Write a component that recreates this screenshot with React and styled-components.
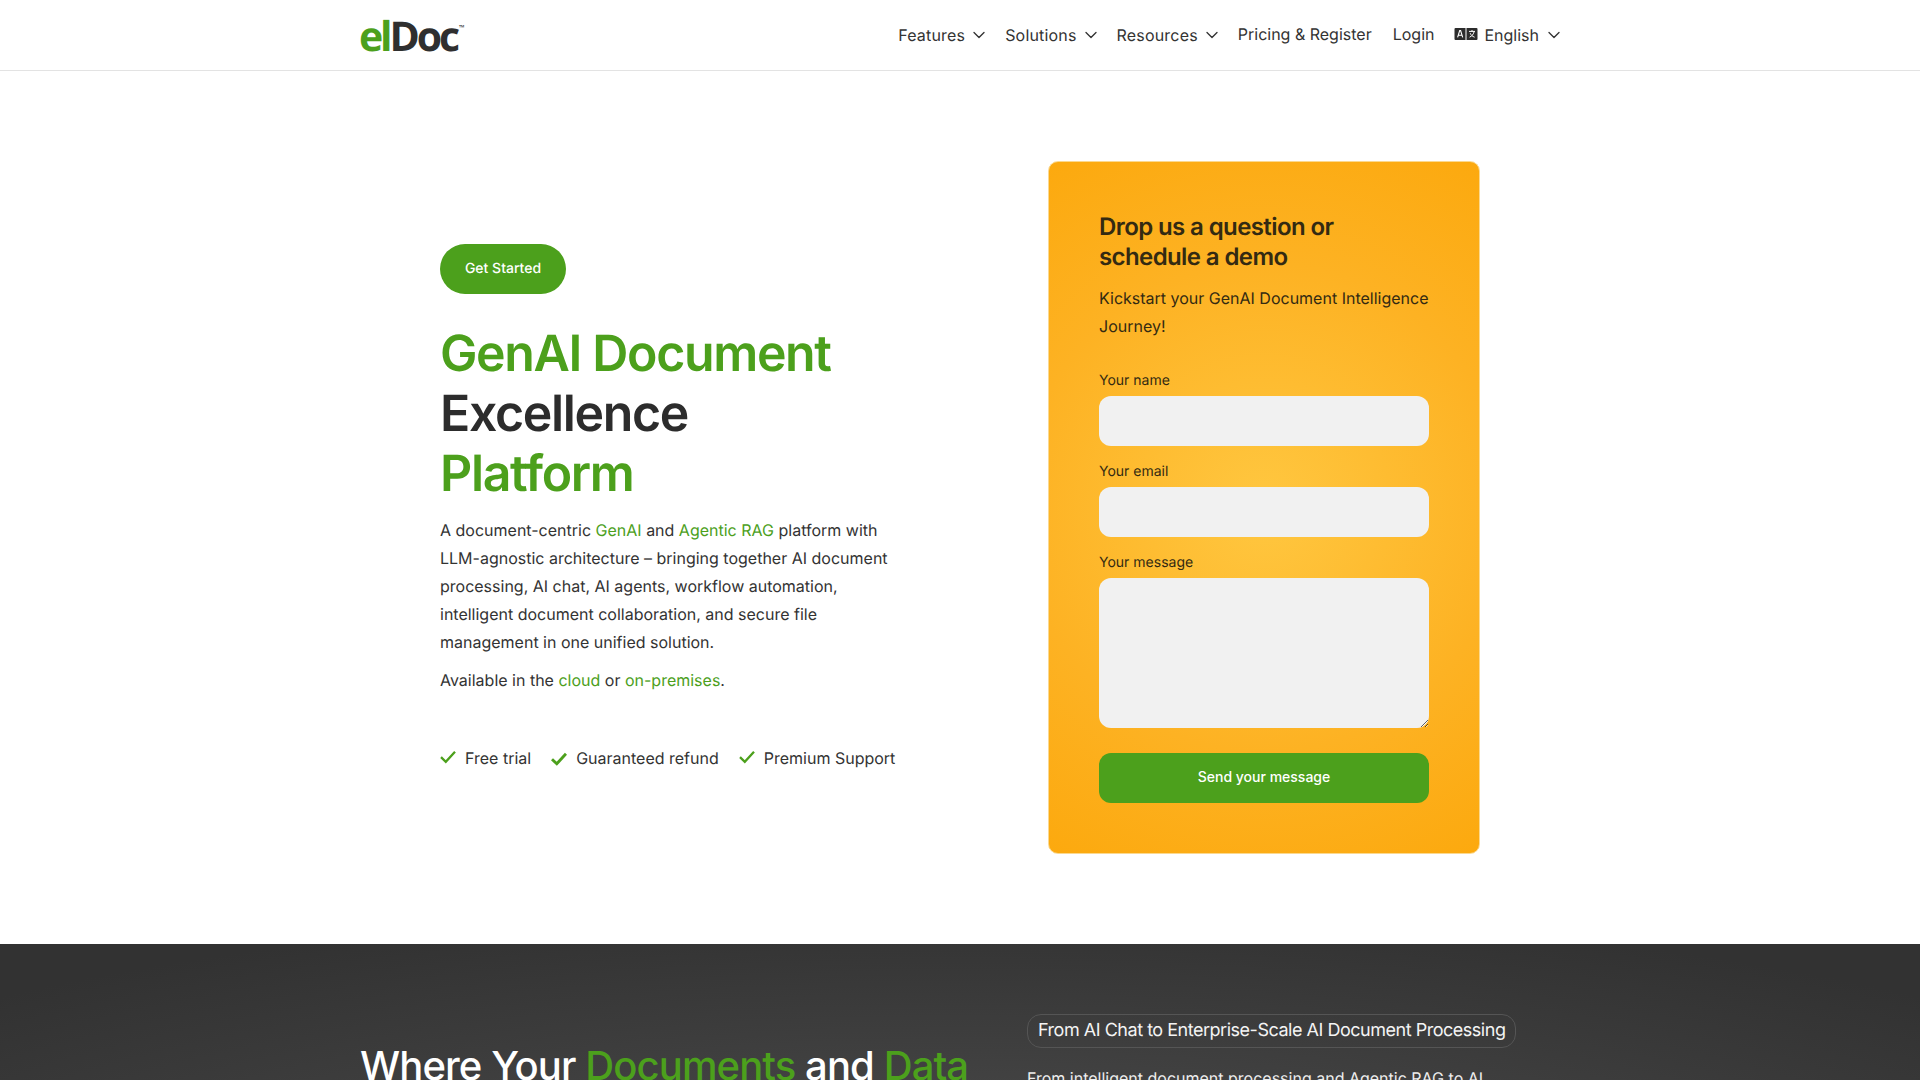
import React from 'react';
import styled, { createGlobalStyle } from 'styled-components';
import { ChevronDown } from 'lucide-react';

const GREEN = '#4ca01c';
const INK = '#333333';

const GlobalStyle = createGlobalStyle`
  html, body {
    margin: 0;
    padding: 0;
    background: #fff;
    height: 1080px;
    overflow: hidden;
  }
  body {
    font-family: Inter, 'Liberation Sans', sans-serif;
    color: ${INK};
    text-rendering: geometricPrecision;
  }
  * {
    box-sizing: border-box;
  }
`;

const Header = styled.header`
  height: 71px;
  border-bottom: 1px solid #e3e3e3;
`;

const HeaderInner = styled.div`
  width: 1200px;
  height: 70px;
  margin: 0 auto;
  display: flex;
  align-items: center;
  justify-content: space-between;
`;

const Logo = styled.a`
  display: flex;
  align-items: flex-start;
  font-family: 'Open Sans', sans-serif;
  font-size: 41px;
  font-weight: 700;
  line-height: 56px;
  letter-spacing: -3.1px;
  color: #2f2f2f;
  padding-top: 2px;
  margin-left: -1px;

  em {
    font-style: normal;
    color: ${GREEN};
  }

  sup {
    font-size: 7px;
    line-height: 7px;
    letter-spacing: 0;
    margin: 17px 0 0 2px;
  }
`;

const Nav = styled.nav`
  display: flex;
  align-items: center;
  gap: 20px;
  margin-right: 1px;
`;

const NavItem = styled.a`
  display: flex;
  align-items: center;
  gap: ${(p) => (p.$menu ? '4px' : '5px')};
  font-size: 16px;
  line-height: 24px;
  letter-spacing: ${(p) => (p.$menu ? '0.18px' : '0')};
  margin-right: ${(p) => (p.$wide ? '1px' : '0')};
  color: ${INK};
  position: relative;
  top: ${(p) => (p.$raised ? '-1px' : '0')};
`;

const Caret = styled(ChevronDown)`
  flex: none;
  margin-right: ${(p) => (p.$tail ? '-5px' : '-4px')};
`;

const LangIcon = styled.svg`
  flex: none;
  margin-right: 1px;
  margin-top: -2px;
`;

const Hero = styled.section`
  width: 1200px;
  margin: 0 auto;
  padding: 90px 0;
  display: grid;
  grid-template-columns: 688px 432px;
  align-items: center;
`;

const HeroText = styled.div`
  padding: 0 0 1px 80px;
`;

const Pill = styled.a`
  display: inline-flex;
  align-items: center;
  justify-content: center;
  width: 126px;
  height: 50px;
  padding-bottom: 2px;
  border-radius: 25px;
  background: ${GREEN};
  color: #fff;
  font-size: 14px;
  font-weight: 500;
`;

const Title = styled.h1`
  margin: 30px 0 0;
  font-size: 50px;
  line-height: 60px;
  font-weight: 640;
  letter-spacing: -1.35px;
  color: #2c2c2c;

  span {
    color: ${GREEN};
  }
`;

const Lead = styled.p`
  margin: ${(p) => (p.$second ? '10px' : '12px')} 0 0;
  font-size: 16px;
  line-height: 28px;
  width: 470px;
  color: ${INK};

  a {
    color: ${GREEN};
  }
`;

const Perks = styled.ul`
  list-style: none;
  margin: 52px 0 0;
  padding: 0;
  display: flex;
  gap: 20px;
`;

const Perk = styled.li`
  display: flex;
  align-items: center;
  gap: 9px;
  font-size: 16px;
  line-height: 24px;
  color: ${INK};
`;

const CheckIcon = styled.svg`
  flex: none;
  position: relative;
  top: ${(p) => (p.$low ? '1px' : '-1px')};
`;

const FormCard = styled.form`
  padding: 50px;
  border-radius: 10px;
  border: 1px solid #fbd98f;
  background: radial-gradient(circle at 50% 50%, #ffc740 0%, #fdb223 60%, #fca90e 100%);
  color: #332a12;
`;

const FormTitle = styled.h2`
  margin: 0;
  font-size: 24px;
  line-height: 30px;
  font-weight: 600;
  letter-spacing: -0.6px;
`;

const FormLead = styled.p`
  margin: 12px 0 0;
  font-size: 16px;
  line-height: 28px;
`;

const Field = styled.label`
  display: block;
  margin-top: ${(p) => (p.$first ? '27px' : '12px')};
  font-size: 14px;
  line-height: 28px;
`;

const Input = styled.input`
  display: block;
  width: 100%;
  height: 50px;
  margin-top: 1px;
  border: 0;
  border-radius: 12px;
  background: #f1f1f1;
  outline: none;
`;

const TextArea = styled.textarea`
  display: block;
  width: 100%;
  height: 150px;
  margin-top: 1px;
  border: 0;
  border-radius: 12px;
  background: #f1f1f1;
  outline: none;
`;

const SendButton = styled.button`
  display: block;
  width: 100%;
  height: 50px;
  margin-top: 25px;
  padding: 0 0 3px;
  border: 0;
  border-radius: 12px;
  background: ${GREEN};
  color: #fff;
  font-family: inherit;
  font-size: 14px;
  font-weight: 500;
`;

const Dark = styled.section`
  height: 136px;
  overflow: hidden;
  background: radial-gradient(ellipse 1400px 340px at 50% 300px, #505050 0%, #323232 100%);
  color: #fff;
`;

const DarkInner = styled.div`
  width: 1200px;
  margin: 0 auto;
  display: grid;
  grid-template-columns: 667px 1fr;
`;

const DarkTitle = styled.h2`
  margin: 98px 0 0;
  font-size: 40px;
  line-height: 48px;
  font-weight: 500;
  letter-spacing: -0.9px;
  white-space: nowrap;

  span {
    color: ${GREEN};
  }
`;

const Tag = styled.div`
  display: inline-block;
  margin-top: 70px;
  padding: 0 10px;
  height: 34px;
  border: 1px solid #555;
  border-radius: 14px;
  font-size: 18px;
  line-height: 32px;
  letter-spacing: -0.48px;
  color: #f4f4f4;
  white-space: nowrap;
`;

const DarkLead = styled.p`
  margin: 16px 0 0;
  font-size: 16px;
  line-height: 28px;
  color: #eee;
  white-space: nowrap;
`;

const Check = ({ low }) => (
  <CheckIcon $low={low} width="16" height="14" viewBox="0 0 16 14" fill="none">
    <path d="M1 7.2 L5.8 11.8 L15 1.8" stroke={GREEN} strokeWidth={low ? 2.9 : 2.3} />
  </CheckIcon>
);

const Language = () => (
  <LangIcon width="24" height="12" viewBox="0 0 24 12">
    <path d="M1.5 0h10v12h-10a1 1 0 0 1-1-1V1a1 1 0 0 1 1-1z" fill="#2c2c2c" />
    <path d="M12.5 0h10a1 1 0 0 1 1 1v10a1 1 0 0 1-1 1h-10z" fill="#2c2c2c" />
    <path d="M3.6 9.4 5.7 2.6h.9L8.7 9.4M4.4 7.2h3.6" fill="none" stroke="#fff" strokeWidth="1.1" />
    <path d="M15 3.4h6M18 2v1.4M20.2 3.4c-.5 2.6-2.2 4.6-4.6 5.8M16.2 5.2c.7 1.8 2.2 3.2 4.4 4" fill="none" stroke="#fff" strokeWidth="1" />
  </LangIcon>
);

const Chevron = ({ tail }) => <Caret $tail={tail} size={20} strokeWidth={1.6} />;

export default function App() {
  return (
    <>
      <GlobalStyle />
      <Header>
        <HeaderInner>
          <Logo>
            <em>el</em>Doc<sup>™</sup>
          </Logo>
          <Nav>
            <NavItem $menu>Features <Chevron /></NavItem>
            <NavItem $menu>Solutions <Chevron /></NavItem>
            <NavItem $menu>Resources <Chevron /></NavItem>
            <NavItem $raised $wide>Pricing &amp; Register</NavItem>
            <NavItem $raised>Login</NavItem>
            <NavItem><Language /> English <Chevron tail /></NavItem>
          </Nav>
        </HeaderInner>
      </Header>

      <Hero>
        <HeroText>
          <Pill>Get Started</Pill>
          <Title>
            <span>GenAI Document</span>
            <br />
            Excellence
            <br />
            <span>Platform</span>
          </Title>
          <Lead>
            A document-centric <a>GenAI</a> and <a>Agentic RAG</a> platform with
            <br />
            LLM-agnostic architecture – bringing together AI document
            <br />
            processing, AI chat, AI agents, workflow automation,
            <br />
            intelligent document collaboration, and secure file
            <br />
            management in one unified solution.
          </Lead>
          <Lead $second>
            Available in the <a>cloud</a> or <a>on-premises</a>.
          </Lead>
          <Perks>
            <Perk><Check />Free trial</Perk>
            <Perk><Check low />Guaranteed refund</Perk>
            <Perk><Check />Premium Support</Perk>
          </Perks>
        </HeroText>

        <FormCard>
          <FormTitle>Drop us a question or schedule a demo</FormTitle>
          <FormLead>
            Kickstart your GenAI Document Intelligence
            <br />
            Journey!
          </FormLead>
          <Field $first>
            Your name
            <Input type="text" />
          </Field>
          <Field>
            Your email
            <Input type="email" />
          </Field>
          <Field>
            Your message
            <TextArea />
          </Field>
          <SendButton type="button">Send your message</SendButton>
        </FormCard>
      </Hero>

      <Dark>
        <DarkInner>
          <DarkTitle>
            Where Your <span>Documents</span> and <span>Data</span>
          </DarkTitle>
          <div>
            <Tag>From AI Chat to Enterprise-Scale AI Document Processing</Tag>
            <DarkLead>From intelligent document processing and Agentic RAG to AI</DarkLead>
          </div>
        </DarkInner>
      </Dark>
    </>
  );
}
